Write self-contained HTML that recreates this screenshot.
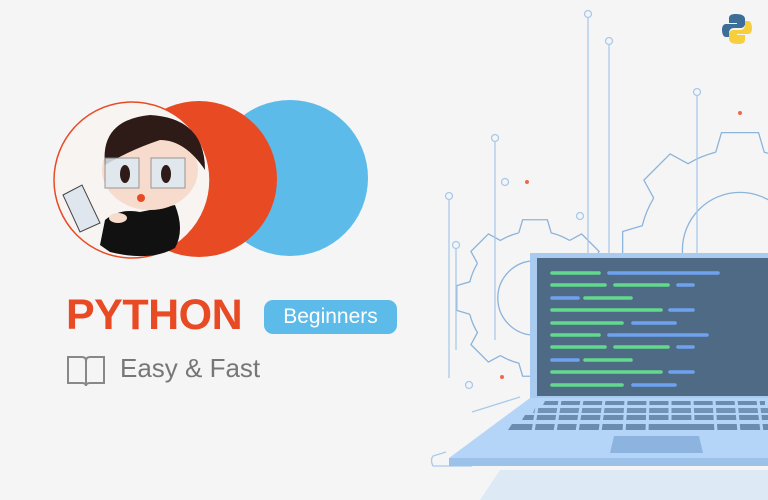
<!DOCTYPE html>
<html><head><meta charset="utf-8"><style>
body{margin:0;width:768px;height:500px;overflow:hidden;background:#f5f5f5;font-family:"Liberation Sans",sans-serif;position:relative}
.t{position:absolute}
</style></head><body>
<svg class="t" style="left:0;top:0" width="768" height="500" viewBox="0 0 768 500">
<defs><path id="seg" d="M-13.5,-54.3 L-10.3,-65.2 L10.3,-65.2 L13.5,-54.3 A56 56 0 0 1 28.8,-48" fill="none"/></defs>
<g stroke="#8db4da" stroke-width="1.3" fill="none">
<g transform="translate(535,298) scale(1.2)" stroke-width="1.1">
<use href="#seg"/><use href="#seg" transform="rotate(45)"/><use href="#seg" transform="rotate(90)"/><use href="#seg" transform="rotate(135)"/><use href="#seg" transform="rotate(180)"/><use href="#seg" transform="rotate(225)"/><use href="#seg" transform="rotate(270)"/><use href="#seg" transform="rotate(315)"/>
<circle r="31"/></g>
<g transform="translate(740,250) scale(1.8)" stroke-width="0.72">
<use href="#seg"/><use href="#seg" transform="rotate(45)"/><use href="#seg" transform="rotate(90)"/><use href="#seg" transform="rotate(135)"/><use href="#seg" transform="rotate(180)"/><use href="#seg" transform="rotate(225)"/><use href="#seg" transform="rotate(270)"/><use href="#seg" transform="rotate(315)"/>
<circle r="32"/></g>
</g>
<g fill="none" stroke="#a9c9ea" stroke-width="1.3">
<line x1="588" y1="18" x2="588" y2="253"/><circle cx="588" cy="14" r="3.5" fill="#f5f5f5"/>
<line x1="609" y1="45" x2="609" y2="253"/><circle cx="609" cy="41" r="3.5" fill="#f5f5f5"/>
<line x1="697" y1="96" x2="697" y2="253"/><circle cx="697" cy="92" r="3.5" fill="#f5f5f5"/>
<line x1="495" y1="142" x2="495" y2="340"/><circle cx="495" cy="138" r="3.5" fill="#f5f5f5"/>
<line x1="449" y1="200" x2="449" y2="378"/><circle cx="449" cy="196" r="3.5" fill="#f5f5f5"/>
<line x1="456" y1="249" x2="456" y2="350"/><circle cx="456" cy="245" r="3.5" fill="#f5f5f5"/>
<circle cx="505" cy="182" r="3.5"/><circle cx="580" cy="216" r="3.5"/><circle cx="469" cy="385" r="3.5"/>
<path d="M472 466 L433 466 Q430 460 433 456 L446 452"/>
<line x1="472" y1="412" x2="520" y2="397"/>
</g>
<g fill="#ec6a4c"><circle cx="527" cy="182" r="2"/><circle cx="740" cy="113" r="2"/><circle cx="502" cy="377" r="2"/></g>
<polygon points="480,500 768,500 768,470 500,470" fill="#dde9f5"/>
<rect x="530" y="253" width="238" height="146" fill="#a8cbef"/>
<rect x="537" y="258" width="231" height="138" fill="#4e6a85"/>
<polygon points="530,398 768,398 768,462 449,462 449,458" fill="#b5d5f8"/>
<rect x="449" y="458" width="319" height="8" fill="#9cc2ea"/>
<g stroke-width="3.6" stroke-linecap="round">
<g stroke="#62d98d">
<line x1="552" y1="273" x2="599" y2="273"/><line x1="552" y1="285" x2="605" y2="285"/><line x1="615" y1="285" x2="668" y2="285"/><line x1="585" y1="298" x2="631" y2="298"/><line x1="552" y1="310" x2="661" y2="310"/><line x1="552" y1="323" x2="622" y2="323"/>
<line x1="552" y1="335" x2="599" y2="335"/><line x1="552" y1="347" x2="605" y2="347"/><line x1="615" y1="347" x2="668" y2="347"/><line x1="585" y1="360" x2="631" y2="360"/><line x1="552" y1="372" x2="661" y2="372"/><line x1="552" y1="385" x2="622" y2="385"/></g>
<g stroke="#6fa2ee">
<line x1="609" y1="273" x2="718" y2="273"/><line x1="678" y1="285" x2="693" y2="285"/><line x1="552" y1="298" x2="578" y2="298"/><line x1="670" y1="310" x2="693" y2="310"/><line x1="633" y1="323" x2="675" y2="323"/>
<line x1="609" y1="335" x2="707" y2="335"/><line x1="678" y1="347" x2="693" y2="347"/><line x1="552" y1="360" x2="578" y2="360"/><line x1="670" y1="372" x2="693" y2="372"/><line x1="633" y1="385" x2="675" y2="385"/></g>
</g>
<g fill="#6a8cae">
<path d="M545 401h220v4h-222z"/><path d="M535 408h233v5h-235z" opacity=".9"/><path d="M525 415h243v5h-246z"/><path d="M512 424h256v6h-260z"/>
</g>
<g stroke="#b5d5f8" stroke-width="3">
<line x1="560" y1="400" x2="555" y2="432"/><line x1="582" y1="400" x2="577" y2="432"/><line x1="604" y1="400" x2="600" y2="432"/><line x1="626" y1="400" x2="624" y2="432"/><line x1="648" y1="400" x2="647" y2="432"/><line x1="670" y1="400" x2="670" y2="420"/><line x1="692" y1="400" x2="693" y2="420"/><line x1="714" y1="400" x2="716" y2="432"/><line x1="736" y1="400" x2="739" y2="432"/><line x1="758" y1="400" x2="762" y2="432"/><line x1="538" y1="400" x2="533" y2="432"/>
</g>
<polygon points="614,436 699,436 703,453 610,453" fill="#8db4de"/>
<circle cx="290" cy="178" r="78" fill="#5dbbea"/>
<circle cx="199" cy="179" r="78" fill="#e84a24"/>
<circle cx="132" cy="180" r="78" fill="#f7f4f2" stroke="#e84a24" stroke-width="1.5"/>
<path d="M100 245 L105 220 Q120 208 140 212 L175 205 Q185 230 175 248 Q150 262 110 252Z" fill="#111"/>
<ellipse cx="150" cy="170" rx="48" ry="40" fill="#f7dccd"/>
<path d="M105 165 Q100 120 150 115 Q205 118 205 170 Q185 140 160 140 Q130 150 105 165Z" fill="#2e1b18"/>
<rect x="105" y="158" width="34" height="30" fill="#dde9f3" stroke="#888" opacity=".85"/>
<rect x="151" y="158" width="34" height="30" fill="#dde9f3" stroke="#888" opacity=".85"/>
<ellipse cx="125" cy="174" rx="5" ry="9" fill="#2e1b18"/><ellipse cx="166" cy="174" rx="5" ry="9" fill="#2e1b18"/>
<circle cx="141" cy="198" r="4" fill="#e84a24"/>
<path d="M63 195 L82 185 L100 223 L80 232Z" fill="#dfe6ee" stroke="#444"/>
<ellipse cx="118" cy="218" rx="9" ry="5" fill="#f7dccd"/>
</svg>
<div class="t" style="left:66px;top:291px;font-size:43px;font-weight:bold;color:#e84a24;letter-spacing:-0.5px">PYTHON</div>
<div class="t" style="left:264px;top:300px;width:133px;height:34px;background:#5dbbea;border-radius:9px;color:#fff;font-size:21px;line-height:34px;text-align:center">Beginners</div>
<svg class="t" style="left:66px;top:354px" width="40" height="34" viewBox="0 0 40 34"><path d="M2 3h14q4 0 4 4v25q0-3-4-3H2Z M38 3H24q-4 0-4 4v25q0-3 4-3h14Z" fill="none" stroke="#888" stroke-width="2"/></svg>
<div class="t" style="left:120px;top:353px;font-size:26px;color:#777">Easy &amp; Fast</div>
<svg class="t" style="left:721px;top:13px" width="32" height="32" viewBox="0 0 32 32"><path d="M15 1C8 1 8 4 8 6v4h8v1H5C2 11 1 14 1 17s1 7 4 7h3v-4c0-3 2-5 5-5h7c2 0 4-2 4-4V6c0-3-3-5-9-5z" fill="#3d6e97"/><path d="M17 31c7 0 7-3 7-5v-4h-8v-1h11c3 0 4-3 4-6s-1-7-4-7h-3v4c0 3-2 5-5 5h-7c-2 0-4 2-4 4v5c0 3 3 5 9 5z" fill="#f7cf3c"/></svg>
</body></html>
